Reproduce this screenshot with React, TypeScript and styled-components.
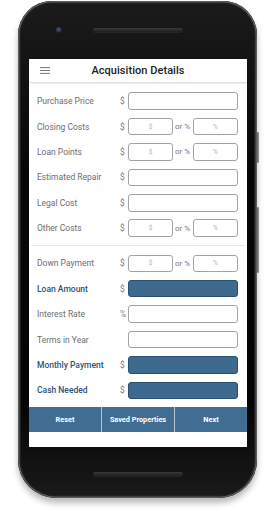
import React from "react";
import styled, { createGlobalStyle } from "styled-components";

const Global = createGlobalStyle`
  html, body { margin: 0; padding: 0; background: #fff; }
  body {
    font-family: Roboto, "Liberation Sans", Arial, sans-serif;
    width: 277px; height: 512px; overflow: hidden;
  }
  * { box-sizing: border-box; }
`;

const Stage = styled.div`
  width: 277px;
  height: 512px;
  padding: 1px 0 0 18px;
`;

const Phone = styled.div`
  position: relative;
  width: 239px;
  height: 497px;
  border-radius: 34px 34px 38px 38px;
  background: linear-gradient(180deg, #1b1b1b 0%, #060606 35%, #040404 80%, #1a1a1a 100%);
  box-shadow: inset 0 0 0 1.5px #5c5c5c, inset 0 0 0 3px #202020, 0 5px 6px rgba(0, 0, 0, 0.28);
  display: flex;
  flex-direction: column;
  padding: 0 10px 0 11px;
`;

const SideKey = styled.div<{ $top: number; $h: number }>`
  position: absolute;
  right: -2px;
  top: ${(p) => p.$top}px;
  width: 2.5px;
  height: ${(p) => p.$h}px;
  border-radius: 1px;
  background: linear-gradient(90deg, #5a5a5a, #9a9a9a);
`;

const TopBezel = styled.div`
  height: 58px;
  display: flex;
  align-items: center;
  padding-left: 27px;
`;

const Camera = styled.div`
  width: 6px;
  height: 6px;
  border-radius: 50%;
  background: radial-gradient(circle at 40% 40%, #4a5a7a, #1a2030 70%);
`;

const Speaker = styled.div<{ $ml?: number }>`
  margin-left: ${(p) => p.$ml ?? 0}px;
  width: 90px;
  height: 4px;
  border-radius: 2px;
  background: linear-gradient(180deg, #3a3a3a, #1e1e1e);
  box-shadow: 0 0.5px 0 #333;
`;

const BottomBezel = styled.div`
  flex: 1;
  display: flex;
  justify-content: center;
  padding-top: 25px;
`;

const Screen = styled.div`
  height: 388px;
  background: #fff;
  display: flex;
  flex-direction: column;
`;

const Header = styled.div`
  height: 24px;
  flex: none;
  border-bottom: 1px solid #e0e0e0;
  display: grid;
  grid-template-columns: 30px 1fr 30px;
  align-items: center;
  box-shadow: 0 0.5px 1px rgba(0, 0, 0, 0.06);
`;

const Menu = styled.div`
  padding-left: 11px;
  display: flex;
  align-items: center;
`;

const Title = styled.div`
  text-align: center;
  font-size: 11px;
  font-weight: 500;
  color: #222;
  letter-spacing: 0.05px;
`;

const Form = styled.div`
  padding-top: 5.5px;
  display: flex;
  flex-direction: column;
`;

const Row = styled.div`
  height: 25.4px;
  display: flex;
  align-items: center;
  padding: 0 9px 0 8px;
`;

const Label = styled.div<{ $strong?: boolean }>`
  width: 83px;
  font-size: 8.5px;
  color: ${(p) => (p.$strong ? "#2b5479" : "#6e6e6e")};
  font-weight: ${(p) => (p.$strong ? 500 : 400)};
  white-space: nowrap;
`;

const Sign = styled.div`
  width: 8px;
  font-size: 8.4px;
  color: #777;
`;

const Field = styled.input<{ $filled?: boolean; $small?: boolean }>`
  flex: ${(p) => (p.$small ? "none" : "1")};
  width: ${(p) => (p.$small ? "45px" : "auto")};
  min-width: 0;
  height: 17.5px;
  padding: 0;
  margin: 0;
  border-radius: 3px;
  border: 1px solid ${(p) => (p.$filled ? "#2b4f6f" : "#a3a3a3")};
  background: ${(p) => (p.$filled ? "#3f6a8f" : "#fff")};
  font-family: inherit;
  font-size: 6.5px;
  text-align: center;
  outline: none;
  &::placeholder { color: #b5b5b5; }
`;

const Or = styled.div`
  width: 20px;
  flex: none;
  font-size: 8px;
  color: #777;
  padding-left: 2px;
  white-space: nowrap;
`;

const Divider = styled.div`
  height: 1px;
  margin: 4px 2px 4.8px;
  background: #e6e6e6;
`;

const ButtonBar = styled.div`
  margin-top: 4px;
  height: 25px;
  flex: none;
  display: grid;
  grid-template-columns: 1fr 1fr 1fr;
  gap: 1px;
  background: #b4c4d3;
`;

const BarButton = styled.div`
  background: #426d92;
  color: #fff;
  font-size: 7.3px;
  font-weight: 700;
  display: flex;
  align-items: center;
  justify-content: center;
`;

type RowDef = {
  label: string;
  sign?: string;
  kind: "full" | "split" | "filled";
  strong?: boolean;
};

const groupA: RowDef[] = [
  { label: "Purchase Price", sign: "$", kind: "full" },
  { label: "Closing Costs", sign: "$", kind: "split" },
  { label: "Loan Points", sign: "$", kind: "split" },
  { label: "Estimated Repair", sign: "$", kind: "full" },
  { label: "Legal Cost", sign: "$", kind: "full" },
  { label: "Other Costs", sign: "$", kind: "split" },
];

const groupB: RowDef[] = [
  { label: "Down Payment", sign: "$", kind: "split" },
  { label: "Loan Amount", sign: "$", kind: "filled", strong: true },
  { label: "Interest Rate", sign: "%", kind: "full" },
  { label: "Terms in Year", kind: "full" },
  { label: "Monthly Payment", sign: "$", kind: "filled", strong: true },
  { label: "Cash Needed", sign: "$", kind: "filled", strong: true },
];

function FormRow({ r }: { r: RowDef }) {
  return (
    <Row>
      <Label $strong={r.strong}>{r.label}</Label>
      <Sign>{r.sign ?? ""}</Sign>
      {r.kind === "split" ? (
        <>
          <Field $small readOnly placeholder="$" />
          <Or>or %</Or>
          <Field $small readOnly placeholder="%" />
        </>
      ) : (
        <Field readOnly $filled={r.kind === "filled"} />
      )}
    </Row>
  );
}

export default function App() {
  return (
    <>
      <Global />
      <Stage>
        <Phone>
          <SideKey $top={131} $h={31} />
          <SideKey $top={206} $h={66} />
          <TopBezel>
            <Camera />
            <Speaker $ml={31} />
          </TopBezel>
          <Screen>
            <Header>
              <Menu>
                <svg width="10" height="7" viewBox="0 0 10 7">
                  <path d="M0 0.6H10M0 3.5H10M0 6.4H10" stroke="#777" strokeWidth="1" />
                </svg>
              </Menu>
              <Title>Acquisition Details</Title>
              <div />
            </Header>
            <Form>
              {groupA.map((r) => (
                <FormRow key={r.label} r={r} />
              ))}
              <Divider />
              {groupB.map((r) => (
                <FormRow key={r.label} r={r} />
              ))}
            </Form>
            <ButtonBar>
              <BarButton>Reset</BarButton>
              <BarButton>Saved Properties</BarButton>
              <BarButton>Next</BarButton>
            </ButtonBar>
          </Screen>
          <BottomBezel>
            <Speaker />
          </BottomBezel>
        </Phone>
      </Stage>
    </>
  );
}
